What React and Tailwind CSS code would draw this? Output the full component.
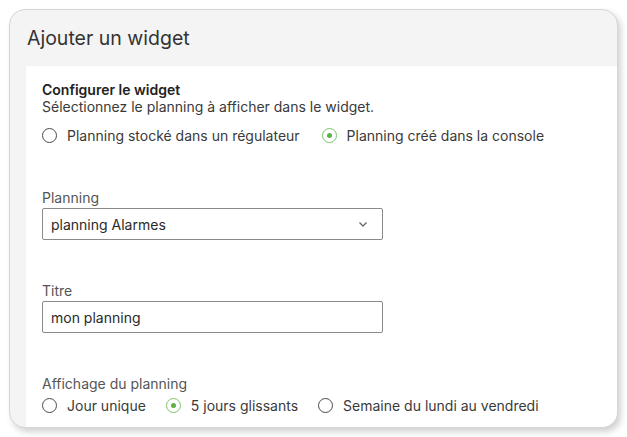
import React, { useState } from 'react';

const Radio = ({ label, checked, onClick }) => (
  <button type="button" onClick={onClick} className="flex items-center gap-[10px] text-[#3a3a3a]">
    <span
      className={
        'flex h-[15px] w-[15px] items-center justify-center rounded-full border ' +
        (checked ? 'border-[#7cc36a]' : 'border-[#4a4a4a]')
      }
    >
      {checked && <span className="h-[5px] w-[5px] rounded-full bg-[#5cb247]" />}
    </span>
    <span>{label}</span>
  </button>
);

const App = () => {
  const [source, setSource] = useState('console');
  const [view, setView] = useState('5j');
  const [title, setTitle] = useState('mon planning');

  return (
    <div className="h-[437px] w-[627px] bg-white pl-[9px] pt-[9px] font-['Inter',sans-serif] text-[14px] leading-[17px]">
      <div className="flex h-[419px] w-[609px] flex-col overflow-hidden rounded-[16px] border border-[#d6d6d6] bg-[#f4f4f4] shadow-[3px_4px_6px_rgba(0,0,0,0.18)]">
        <div className="flex h-[56px] shrink-0 items-center px-[17px]">
          <h1 className="text-[19.5px] leading-[24px] text-[#333]">Ajouter un widget</h1>
        </div>
        <div className="ml-[16px] flex-1 bg-white pl-[16px] pt-[15px]">
          <p className="font-semibold text-[#222]">Configurer le widget</p>
          <p className="text-[#3a3a3a]">Sélectionnez le planning à afficher dans le widget.</p>
          <div className="mt-[12px] flex gap-[22px]">
            <Radio label="Planning stocké dans un régulateur" checked={source === 'reg'} onClick={() => setSource('reg')} />
            <Radio label="Planning créé dans la console" checked={source === 'console'} onClick={() => setSource('console')} />
          </div>

          <label className="mt-[45px] block text-[#555]">Planning</label>
          <div className="mt-[2px] flex h-[32px] w-[341px] items-center justify-between rounded-[2px] border border-[#8a8a8a] px-[8px] text-[#2a2a2a]">
            <span>planning Alarmes</span>
            <svg width="12" height="12" viewBox="0 0 12 12" fill="none" stroke="#666" strokeWidth="1.3" className="mr-[5px]">
              <path d="M2.5 4.5 6 8l3.5-3.5" />
            </svg>
          </div>

          <label className="mt-[42px] block text-[#555]">Titre</label>
          <input
            value={title}
            onChange={(e) => setTitle(e.target.value)}
            className="mt-[2px] block h-[32px] w-[341px] rounded-[2px] border border-[#8a8a8a] px-[8px] text-[#2a2a2a] outline-none"
          />

          <label className="mt-[42px] block text-[#555]">Affichage du planning</label>
          <div className="mt-[5px] flex gap-[20px]">
            <Radio label="Jour unique" checked={view === '1j'} onClick={() => setView('1j')} />
            <Radio label="5 jours glissants" checked={view === '5j'} onClick={() => setView('5j')} />
            <Radio label="Semaine du lundi au vendredi" checked={view === 'sem'} onClick={() => setView('sem')} />
          </div>
        </div>
      </div>
    </div>
  );
};

export default App;
